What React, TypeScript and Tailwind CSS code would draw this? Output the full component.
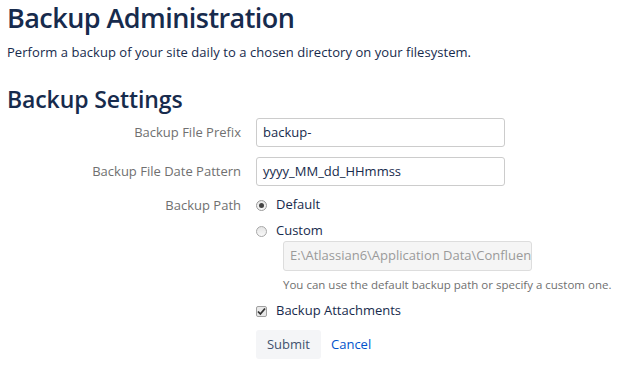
export default function App() {
  return (
    <div className="w-[627px] h-[373px] bg-white text-[#172b4d] font-['Open_Sans','Noto_Sans',sans-serif] px-[7px] pt-[1px] overflow-hidden">
      {/* Page header */}
      <h1 className="text-[27px] leading-[34px] font-semibold tracking-[-0.55px]">Backup Administration</h1>
      <p className="text-[13px] leading-[18px] mt-[8px] tracking-[0.05px]">
        Perform a backup of your site daily to a chosen directory on your filesystem.
      </p>

      <h2 className="text-[23px] leading-[28px] font-semibold mt-[24px] tracking-[-0.1px]">Backup Settings</h2>

      {/* Form */}
      <div className="flex flex-col text-[13px] mt-[5px]">
        <div className="flex items-center h-[29px]">
          <label className="w-[234px] text-right text-[#707070] shrink-0">Backup File Prefix</label>
          <div className="ml-[15px] w-[249px] h-[29px] border border-[#ccc] rounded-[3px] px-[6px] flex items-center">
            backup-
          </div>
        </div>

        <div className="flex items-center h-[29px] mt-[10px]">
          <label className="w-[234px] text-right text-[#707070] shrink-0">Backup File Date Pattern</label>
          <div className="ml-[15px] w-[249px] h-[29px] border border-[#ccc] rounded-[3px] px-[6px] flex items-center">
            yyyy_MM_dd_HHmmss
          </div>
        </div>

        <div className="flex mt-[9px]">
          <label className="w-[234px] text-right text-[#707070] shrink-0 leading-[20px]">Backup Path</label>
          <div className="ml-[15px] flex flex-col">
            <div className="flex items-center h-[20px]">
              <span className="w-[11px] h-[11px] rounded-full border border-[#9a9a9a] bg-gradient-to-b from-[#e6e6e6] to-[#f8f8f8] flex items-center justify-center">
                <span className="w-[5px] h-[5px] rounded-full bg-[#444]"></span>
              </span>
              <span className="ml-[9px]">Default</span>
            </div>
            <div className="flex items-center h-[20px] mt-[6px]">
              <span className="w-[11px] h-[11px] rounded-full border border-[#a8a8a8] bg-gradient-to-b from-[#e4e4e4] to-[#f9f9f9]"></span>
              <span className="ml-[9px]">Custom</span>
            </div>
            <div className="ml-[27px] w-[249px] h-[30px] border border-[#ddd] rounded-[3px] bg-[#f5f5f5] text-[#9a9a9a] px-[6px] flex items-center overflow-hidden whitespace-nowrap">
              E:\Atlassian6\Application Data\Confluence
            </div>
            <div className="ml-[27px] mt-[6px] text-[11.5px] leading-[16px] text-[#707070] whitespace-nowrap">
              You can use the default backup path or specify a custom one.
            </div>
            <div className="flex items-center h-[20px] mt-[8px]">
              <span className="w-[11px] h-[11px] rounded-[2px] border border-[#a0a0a0] bg-[#e8e8e8] flex items-center justify-center">
                <svg width="9" height="9" viewBox="0 0 9 9">
                  <path d="M1 4.5 L3.4 7 L8 1.5" stroke="#333" strokeWidth="1.8" fill="none" />
                </svg>
              </span>
              <span className="ml-[9px]">Backup Attachments</span>
            </div>
            <div className="flex items-center mt-[9px]">
              <button className="h-[29px] w-[65px] rounded-[3px] bg-[#f4f5f7] text-[#42526e] text-[13px]">Submit</button>
              <a className="ml-[10px] text-[#0052cc]">Cancel</a>
            </div>
          </div>
        </div>
      </div>
    </div>
  );
}
